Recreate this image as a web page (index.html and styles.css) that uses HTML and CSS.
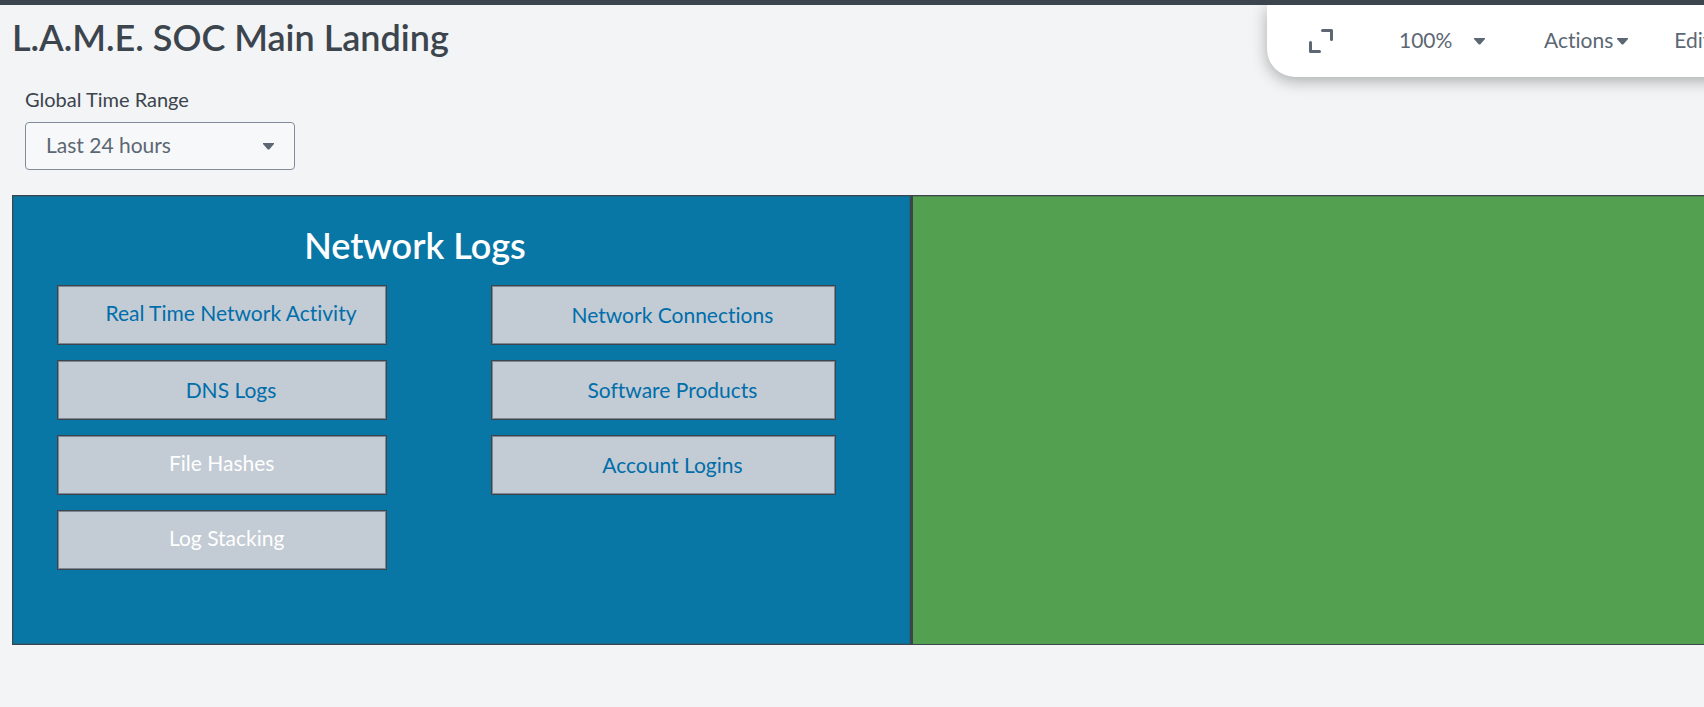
FILE: index.html
```html
<!DOCTYPE html>
<html lang="en">
<head>
<meta charset="utf-8">
<title>L.A.M.E. SOC Main Landing</title>
<link rel="stylesheet" href="styles.css">
</head>
<body>
<header class="header">
  <h1 class="title">L.A.M.E. SOC Main Landing</h1>
  <div class="toolbar">
    <button class="tool icon-button" type="button" aria-label="Full screen">
      <svg width="24" height="24" viewBox="0 0 24 24" fill="none" stroke="currentColor" stroke-width="3" stroke-linecap="round" stroke-linejoin="round"><path d="M13.5 1.5h9v9M1.5 13.5v9h9"/></svg>
    </button>
    <div class="select-wrap zoom-wrap">
      <select class="select zoom" aria-label="Zoom level"><option>100%</option></select>
      <svg class="caret" width="11" height="7" viewBox="0 0 11 7"><path d="M0 0h11v1L6.200 6.500h-1.400L0 1z" fill="currentColor"/></svg>
    </div>
    <button class="tool actions" type="button">Actions
      <svg class="caret" width="11" height="7" viewBox="0 0 11 7"><path d="M0 0h11v1L6.200 6.500h-1.400L0 1z" fill="currentColor"/></svg>
    </button>
    <button class="tool edit" type="button">Edit</button>
  </div>
</header>
<main>
  <div class="filter">
    <label class="filter-label" for="range">Global Time Range</label>
    <div class="select-wrap range-wrap">
      <select class="select range" id="range"><option>Last 24 hours</option></select>
      <svg class="caret" width="11" height="7" viewBox="0 0 11 7"><path d="M0 0h11v1L6.200 6.500h-1.400L0 1z" fill="currentColor"/></svg>
    </div>
  </div>
  <div class="canvas">
    <section class="panel network">
      <h2 class="panel-title">Network Logs</h2>
      <div class="columns">
        <div class="column">
          <div class="tile raised"><a class="link" href="#realtime">Real Time Network Activity</a></div>
          <div class="tile"><a class="link" href="#dns">DNS Logs</a></div>
          <div class="tile raised plain">File Hashes</div>
          <div class="tile raised plain">Log Stacking</div>
        </div>
        <div class="column">
          <div class="tile"><a class="link" href="#connections">Network Connections</a></div>
          <div class="tile"><a class="link" href="#software">Software Products</a></div>
          <div class="tile"><a class="link" href="#logins">Account Logins</a></div>
        </div>
      </div>
    </section>
    <section class="panel green"></section>
  </div>
</main>
</body>
</html>
```
FILE: styles.css
```css
* {
  box-sizing: border-box;
}

body {
  margin: 0;
  min-height: 100vh;
  border-top: 5px solid #3c444d;
  background: #f2f4f5;
  color: #3c444d;
  font-family: Lato, "Open Sans", sans-serif;
  font-size: 21px;
  font-variant-ligatures: none;
  line-height: 28px;
  overflow-x: hidden;
}

.header {
  display: flex;
  justify-content: space-between;
  height: 72px;
  padding-left: 12px;
}

.title {
  margin: 0;
  padding-top: 10px;
  font-size: 36px;
  font-weight: 600;
  line-height: 44px;
}

.toolbar {
  display: flex;
  flex: none;
  align-items: center;
  width: 469px;
  margin-right: -32px;
  padding-left: 42px;
  border-bottom-left-radius: 28px;
  background: #fff;
  box-shadow: 0 4px 16px rgba(0, 0, 0, 0.3);
  clip-path: inset(0 0 -32px -32px);
  color: #5c6773;
}

.tool {
  flex: none;
  padding: 0;
  border: 0;
  background: none;
  color: inherit;
  font: inherit;
  font-variant-ligatures: none;
}

.icon-button {
  display: flex;
  margin-right: 66px;
}

.actions {
  display: flex;
  align-items: center;
  gap: 4px;
  margin-right: 46px;
  padding-bottom: 2px;
}

.actions .caret {
  margin-top: 2px;
}

.edit {
  padding-bottom: 2px;
}

.select-wrap {
  display: grid;
  flex: none;
  align-items: center;
  color: #5c6773;
}

.select-wrap > * {
  grid-area: 1 / 1;
}

.select {
  width: 100%;
  border: 0;
  background: none;
  color: inherit;
  font: inherit;
  appearance: none;
}

.caret {
  justify-self: end;
  pointer-events: none;
}

.zoom-wrap {
  width: 86px;
  margin-right: 59px;
}

.zoom {
  padding-bottom: 2px;
}

.filter {
  padding: 8px 25px 25px;
}

.filter-label {
  display: block;
  margin-bottom: 9px;
  font-size: 20px;
}

.range-wrap {
  width: 270px;
}

.range-wrap .caret {
  margin-right: 21px;
}

.range {
  height: 48px;
  padding: 0 44px 2px 20px;
  border: 1px solid #818d99;
  border-radius: 4px;
  background: #f7f8fa;
}

.canvas {
  display: grid;
  grid-template-columns: 17fr 15fr;
  padding-left: 12px;
}

.panel {
  min-height: 450px;
  border: 1px solid #3c444d;
  box-shadow: inset 0 0 0 1px rgba(60, 68, 77, 0.3);
}

.network {
  padding: 27px 74px 0 44px;
  background: #0877a6;
}

.green {
  border-right: 0;
  border-left-width: 2px;
  background: #53a051;
  box-shadow: inset 0 1px rgba(60, 68, 77, 0.3);
}

.panel-title {
  margin: 0 0 18px;
  padding-right: 63px;
  color: #fff;
  font-size: 36px;
  font-weight: 600;
  line-height: 44px;
  text-align: center;
}

.columns {
  display: grid;
  grid-template-columns: 22fr 23fr;
  gap: 104px;
}

.column {
  display: flex;
  flex-direction: column;
  gap: 15px;
}

.tile {
  display: flex;
  align-items: center;
  justify-content: center;
  height: 60px;
  padding-left: 18px;
  border: 1px solid #3c444d;
  background: #c3cbd4;
  box-shadow: inset 0 0 0 1px rgba(60, 68, 77, 0.5);
}

.raised {
  padding-bottom: 4px;
}

.plain {
  justify-content: flex-start;
  padding-left: 111px;
  color: #fff;
}

.link {
  color: #006eaa;
  text-decoration: none;
}
```
